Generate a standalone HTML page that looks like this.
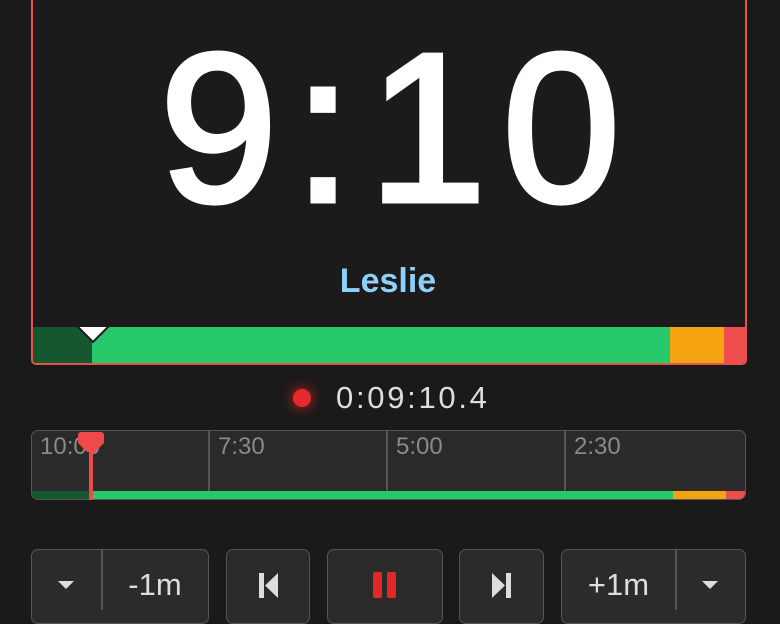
<!DOCTYPE html>
<html><head><style>
*{margin:0;padding:0;box-sizing:border-box}
body{width:780px;height:610px;background:#1b1a1a;position:relative;overflow:hidden;font-family:"Liberation Sans",sans-serif}
.abs{position:absolute}
.main{left:31px;top:-10px;width:716px;height:375px;border:2px solid #e8524e;border-radius:5px;background:#1c1a1a;overflow:hidden}
.big{left:0;width:780px;top:3px;padding-left:16px;text-align:center;color:#fff;font-weight:normal;-webkit-text-stroke:5px #fff;font-size:212px;line-height:250px;letter-spacing:16px}
.btn{background:#2b2b2b;border:1.5px solid #555;border-radius:7px;color:#ddd;font-size:30px;display:flex;align-items:center;justify-content:center}
.lbl{color:#8a8a8a;font-size:24px;top:433px}
</style></head><body>
<div class="abs main">
 <div class="abs" style="left:0;top:335px;width:60px;height:36px;background:#15582f"></div>
 <div class="abs" style="left:59px;top:335px;width:579px;height:36px;background:#26c96a"></div>
 <div class="abs" style="left:637px;top:335px;width:55px;height:36px;background:#f5a40f"></div>
 <div class="abs" style="left:691px;top:335px;width:30px;height:36px;background:#ef4e4e"></div>
 <svg class="abs" style="left:43px;top:333px" width="34" height="20"><polygon points="1,1 33,1 17,17" fill="#fff" stroke="#1c1a1a" stroke-width="2"/></svg>
</div>
<div class="abs big">9:10</div>
<div class="abs" style="left:0;width:776px;top:262px;text-align:center;color:#8fd0fa;font-weight:bold;font-size:34px">Leslie</div>
<div class="abs" style="left:293px;top:389px;width:18px;height:18px;border-radius:50%;background:#e62a2a;box-shadow:0 0 10px 3px rgba(230,40,40,.5)"></div>
<div class="abs" style="left:336px;top:380px;color:#ddd;font-size:31px;letter-spacing:2.7px">0:09:10.4</div>
<div class="abs" style="left:31px;top:430px;width:715px;height:70px;border:1.5px solid #555;border-radius:7px;background:#2a2a2a;overflow:hidden">
 <div class="abs" style="left:176px;top:0;width:1.5px;height:62px;background:#555"></div>
 <div class="abs" style="left:354px;top:0;width:1.5px;height:62px;background:#555"></div>
 <div class="abs" style="left:532px;top:0;width:1.5px;height:62px;background:#555"></div>
 <div class="abs" style="left:0;top:60px;width:60px;height:8px;background:#15582f"></div>
 <div class="abs" style="left:59px;top:60px;width:583px;height:8px;background:#26c96a"></div>
 <div class="abs" style="left:641px;top:60px;width:54px;height:8px;background:#f5a40f"></div>
 <div class="abs" style="left:694px;top:60px;width:30px;height:8px;background:#ef4e4e"></div>
</div>
<div class="abs lbl" style="left:40px">10:00</div>
<div class="abs lbl" style="left:218px">7:30</div>
<div class="abs lbl" style="left:396px">5:00</div>
<div class="abs lbl" style="left:574px">2:30</div>
<svg class="abs" style="left:75px;top:432px" width="32" height="70"><path d="M4 0h22a3 3 0 0 1 3 3v8l-9 9h-2v48h-4v-48h-2l-9-9v-8a3 3 0 0 1 3-3z" fill="#ef4a4a"/></svg>
<div class="abs btn" style="left:31px;top:549px;width:178px;height:75px"></div>
<div class="abs" style="left:101px;top:550px;width:1.5px;height:60px;background:#555"></div>
<svg class="abs" style="left:57px;top:580px" width="18" height="12"><polygon points="1,1 17,1 9,9" fill="#ddd"/></svg>
<div class="abs" style="left:102px;top:567px;width:106px;text-align:center;color:#ddd;font-size:31px">-1m</div>
<div class="abs btn" style="left:226px;top:549px;width:84px;height:75px"></div>
<svg class="abs" style="left:258px;top:572px" width="22" height="28"><rect x="1" y="1" width="5" height="25" fill="#ddd"/><polygon points="20,1 20,26 7,13.5" fill="#ddd"/></svg>
<div class="abs btn" style="left:327px;top:549px;width:116px;height:75px"></div>
<div class="abs" style="left:373px;top:572px;width:9px;height:26px;border-radius:2px;background:#e32626"></div>
<div class="abs" style="left:387px;top:572px;width:9px;height:26px;border-radius:2px;background:#e32626"></div>
<div class="abs btn" style="left:459px;top:549px;width:85px;height:75px"></div>
<svg class="abs" style="left:491px;top:572px" width="22" height="28"><rect x="15" y="1" width="5" height="25" fill="#ddd"/><polygon points="1,1 1,26 14,13.5" fill="#ddd"/></svg>
<div class="abs btn" style="left:561px;top:549px;width:185px;height:75px"></div>
<div class="abs" style="left:675px;top:550px;width:1.5px;height:60px;background:#555"></div>
<div class="abs" style="left:562px;top:567px;width:113px;text-align:center;color:#ddd;font-size:31px">+1m</div>
<svg class="abs" style="left:701px;top:580px" width="18" height="12"><polygon points="1,1 17,1 9,9" fill="#ddd"/></svg>
</body></html>
